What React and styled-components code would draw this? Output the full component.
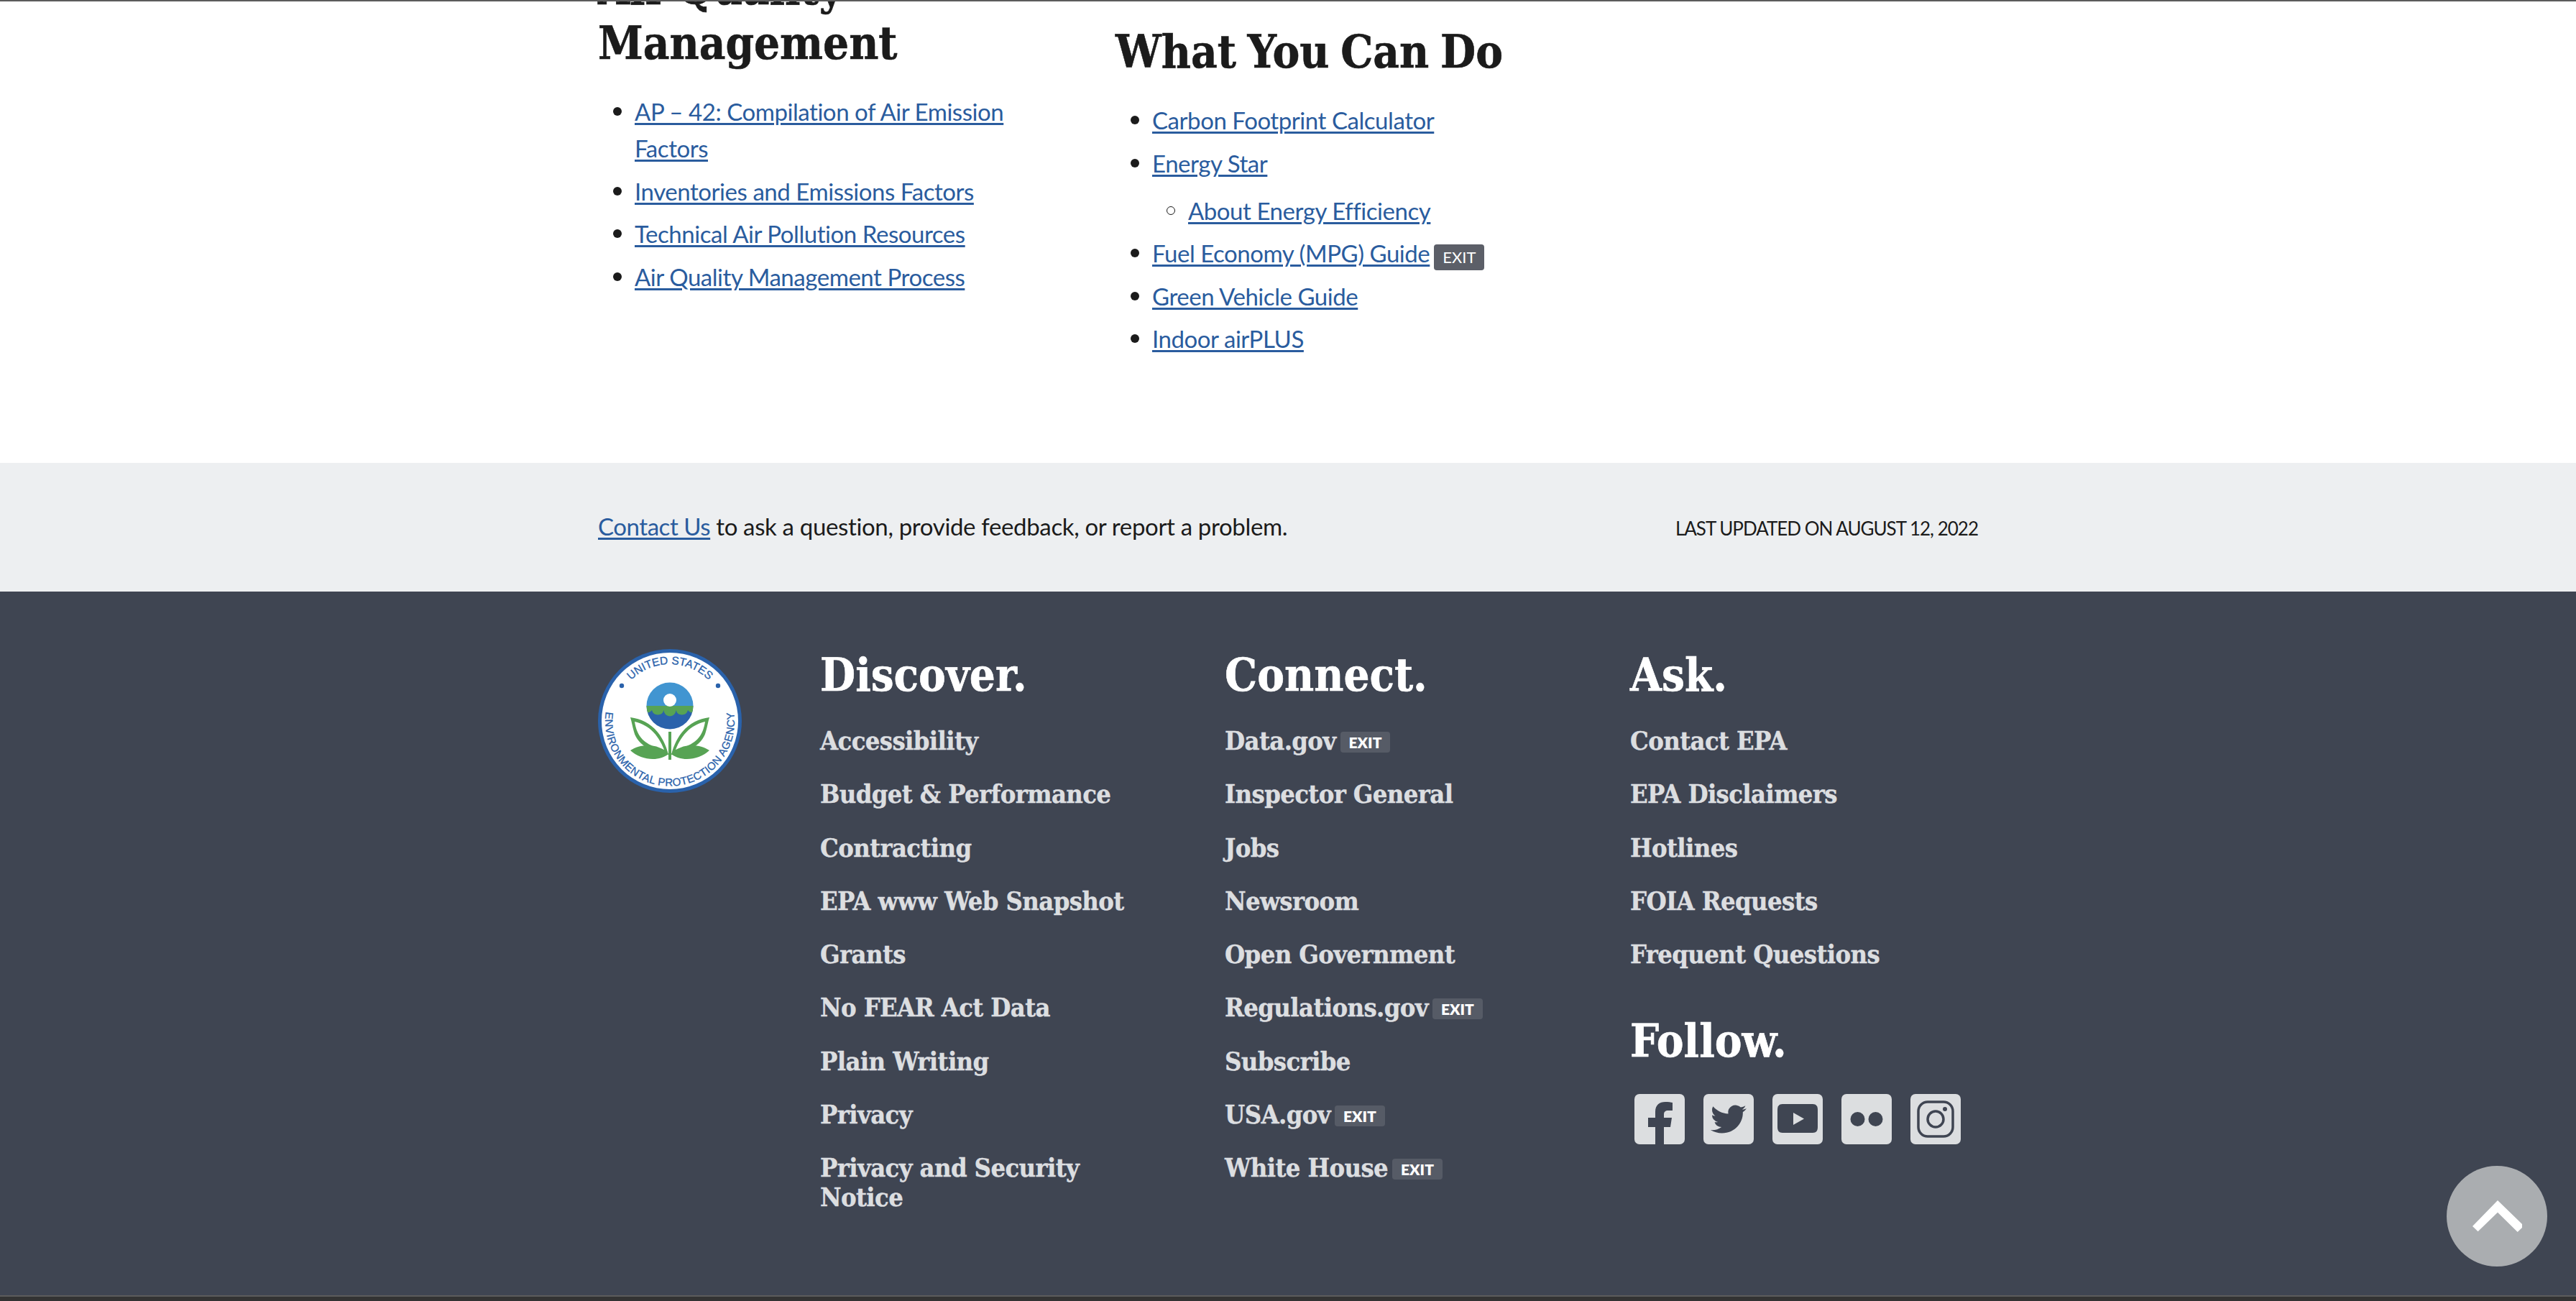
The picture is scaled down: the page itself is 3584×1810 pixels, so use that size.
import React from 'react'
import styled, { createGlobalStyle } from 'styled-components'

const serif = `"DejaVu Serif Condensed", "DejaVu Serif", serif`
const sans = `"Lato", "Noto Sans", sans-serif`

const GlobalStyle = createGlobalStyle`
  html, body { margin: 0; padding: 0; background: #fff; }
  body { font-family: ${sans}; color: #1b1b1b; overflow: hidden; }
`

const Page = styled.div`
  height: 1810px;
  display: flex;
  flex-direction: column;
  overflow: hidden;
  border-top: 2px solid #5c5c5c;
  box-sizing: border-box;
  position: relative;
`

const Content = styled.main`
  height: 642px;
  flex: none;
  width: 1920px;
  margin: 0 auto;
  display: grid;
  grid-template-columns: 720px 720px;
`

const Column = styled.section`
  margin-top: ${({ $top }) => $top}px;
`

const Heading = styled.h2`
  margin: 0 0 32px;
  font-family: ${serif};
  font-size: 63px;
  line-height: 76px;
  font-weight: 700;
  word-spacing: -4px;
  -webkit-text-stroke: 0.6px #1b1b1b;
  color: #1b1b1b;
  width: 620px;
`

const List = styled.ul`
  margin: 0;
  padding: 0 0 0 51px;
  list-style: none;
  width: 570px;
`

const SubList = styled.ul`
  margin: 15px 0 0;
  padding: 0 0 0 50px;
  list-style: none;
`

// bullets sit in the list indent, so they don't change the line height
const Item = styled.li`
  position: relative;
  font-size: 33px;
  line-height: 51px;
  margin-bottom: 8.5px;
  &::before {
    content: '';
    position: absolute;
    left: -30px;
    top: 19px;
    width: 12px;
    height: 12px;
    box-sizing: border-box;
    border-radius: 50%;
    background: ${({ $nested }) => ($nested ? 'transparent' : '#1b1b1b')};
    border: ${({ $nested }) => ($nested ? '1.5px solid #1b1b1b' : '0')};
  }
`

const TextLink = styled.a`
  color: #2a5c9e;
  text-decoration: underline;
  text-decoration-thickness: 3px;
  text-underline-offset: 3px;
  letter-spacing: -0.45px;
`

const ExitTag = styled.span`
  display: inline-block;
  margin-left: 6px;
  padding: 0 12px;
  height: 36px;
  line-height: 36px;
  font-family: ${sans};
  font-size: 22px;
  letter-spacing: 0;
  -webkit-text-stroke: 0;
  font-weight: ${({ $footer }) => ($footer ? 800 : 400)};
  color: #fff;
  border-radius: 4px;
  background: ${({ $footer }) => ($footer ? '#565b66' : '#5c5f68')};
  vertical-align: ${({ $footer }) => ($footer ? '2px' : '-1px')};
  ${({ $footer }) => $footer && 'height: 29px; line-height: 29px; font-size: 21px;'}
`

const Band = styled.div`
  flex: none;
  height: 179px;
  background: #edeff1;
  display: flex;
  align-items: center;
`

const BandInner = styled.div`
  width: 1920px;
  margin: 0 auto;
  padding-bottom: 3px;
  display: flex;
  justify-content: space-between;
  align-items: baseline;
  font-size: 33px;
  letter-spacing: -0.35px;
`

const Updated = styled.span`
  font-size: 26px;
  letter-spacing: -1px;
  text-transform: uppercase;
`

const Footer = styled.footer`
  flex: 1;
  background: #3f4552;
  border-bottom: 2px solid #5c5c5c;
`

const FooterBar = styled.div`
  height: 6px;
  flex: none;
  background: #333;
`

const FooterInner = styled.div`
  width: 1920px;
  margin: 0 auto;
  padding-top: 80px;
  display: grid;
  grid-template-columns: 309px 563px 564px 1fr;
`

const Seal = styled.svg`
  width: 200px;
  height: 200px;
  display: block;
`

const FooterTitle = styled.h3`
  margin: ${({ $follow }) => ($follow ? '60px' : '-4px')} 0 0;
  font-family: ${serif};
  font-size: 63px;
  line-height: 80px;
  font-weight: 700;
  -webkit-text-stroke: 0.6px #fff;
  color: #fff;
`

const FooterLinks = styled.ul`
  margin: 31px 0 0;
  padding: 0;
  list-style: none;
  display: flex;
  flex-direction: column;
  gap: 33.3px;
`

const FooterItem = styled.li`
  font-family: ${serif};
  font-size: 36px;
  line-height: 41px;
  font-weight: 700;
  letter-spacing: -0.6px;
  -webkit-text-stroke: 0.4px #dcdee0;
  color: #dcdee0;
  width: 440px;
`

const SocialRow = styled.div`
  display: flex;
  gap: 26px;
  margin: 34px 0 0 6px;
`

const SocialIcon = styled.svg`
  width: 70px;
  height: 70px;
  display: block;
`

const ScrollTop = styled.button`
  position: absolute;
  right: 40px;
  bottom: 48px;
  width: 140px;
  height: 140px;
  padding: 0;
  border: 0;
  border-radius: 50%;
  background: #aaadb0;
`

const ChevronSvg = styled.svg`
  width: 140px;
  height: 140px;
  display: block;
`

const discover = ['Accessibility', 'Budget & Performance', 'Contracting', 'EPA www Web Snapshot', 'Grants', 'No FEAR Act Data', 'Plain Writing', 'Privacy', 'Privacy and Security Notice']
const connect = [['Data.gov', true], ['Inspector General'], ['Jobs'], ['Newsroom'], ['Open Government'], ['Regulations.gov', true], ['Subscribe'], ['USA.gov', true], ['White House', true]]
const ask = ['Contact EPA', 'EPA Disclaimers', 'Hotlines', 'FOIA Requests', 'Frequent Questions']

const EpaSeal = () => (
  <Seal viewBox="0 0 200 200" aria-label="EPA seal">
    <defs>
      <path id="sealTop" d="M30 66 A77 77 0 0 1 170 66" />
      <path id="sealBottom" d="M15.4 70 A90 90 0 1 0 184.6 70" />
      <clipPath id="sealGlobe"><circle cx="100" cy="79" r="32.5" /></clipPath>
    </defs>
    <circle cx="100" cy="100" r="100" fill="#2a62ab" />
    <circle cx="100" cy="100" r="95" fill="#fff" />
    <text fontFamily="Liberation Sans" fontSize="15.5" fill="#2a62ab" stroke="#2a62ab" strokeWidth="0.3">
      <textPath href="#sealTop" startOffset="50%" textAnchor="middle">UNITED STATES</textPath>
    </text>
    <text fontFamily="Liberation Sans" fontSize="15" fill="#2a62ab" stroke="#2a62ab" strokeWidth="0.3">
      <textPath href="#sealBottom" startOffset="50%" textAnchor="middle" letterSpacing="0.4">ENVIRONMENTAL PROTECTION AGENCY</textPath>
    </text>
    <circle cx="33" cy="51" r="3.2" fill="#2a62ab" />
    <circle cx="167" cy="51" r="3.2" fill="#2a62ab" />
    <g clipPath="url(#sealGlobe)">
      <rect x="60" y="40" width="80" height="39" fill="#4195d1" />
      <rect x="60" y="79" width="80" height="40" fill="#2a62ab" />
      <path d="M60 79 H140 V82 A8.5 8.5 0 0 1 125 85 A8.5 8.5 0 0 1 108.5 85 A8.5 8.5 0 0 1 91.5 85 A8.5 8.5 0 0 1 75 85 A8.5 8.5 0 0 1 60 82 Z" fill="#57a354" />
    </g>
    <circle cx="100" cy="71" r="9" fill="#fff" />
    <rect x="98" y="115" width="4" height="39" fill="#57a354" />
    <path d="M45 95 C70 98 90 115 98 147 C80 145 55 135 50 115 C48 108 47 102 45 95 Z M51 101 C54 120 62 133 92 140 C84 120 72 106 51 101 Z" fill="#57a354" fillRule="evenodd" />
    <path d="M155 95 C130 98 110 115 102 147 C120 145 145 135 150 115 C152 108 153 102 155 95 Z M149 101 C146 120 138 133 108 140 C116 120 128 106 149 101 Z" fill="#57a354" fillRule="evenodd" />
    <path d="M45 141 C60 131 85 131 98 146 C85 157 60 155 45 141 Z" fill="#57a354" />
    <path d="M155 141 C140 131 115 131 102 146 C115 157 140 155 155 141 Z" fill="#57a354" />
  </Seal>
)

const Tile = ({ children, label }) => (
  <SocialIcon viewBox="0 0 70 70" aria-label={label}>
    <rect width="70" height="70" rx="7" fill="#dcdee0" />
    {children}
  </SocialIcon>
)

export default function App() {
  return (
    <Page>
      <GlobalStyle />
      <Content>
        <Column $top={-56}>
          <Heading>Air Quality Management</Heading>
          <List>
            <Item><TextLink>AP – 42: Compilation of Air Emission Factors</TextLink></Item>
            <Item><TextLink>Inventories and Emissions Factors</TextLink></Item>
            <Item><TextLink>Technical Air Pollution Resources</TextLink></Item>
            <Item><TextLink>Air Quality Management Process</TextLink></Item>
          </List>
        </Column>
        <Column $top={32}>
          <Heading>What You Can Do</Heading>
          <List>
            <Item><TextLink>Carbon Footprint Calculator</TextLink></Item>
            <Item>
              <TextLink>Energy Star</TextLink>
              <SubList>
                <Item $nested><TextLink>About Energy Efficiency</TextLink></Item>
              </SubList>
            </Item>
            <Item><TextLink>Fuel Economy (MPG) Guide</TextLink><ExitTag>EXIT</ExitTag></Item>
            <Item><TextLink>Green Vehicle Guide</TextLink></Item>
            <Item><TextLink>Indoor airPLUS</TextLink></Item>
          </List>
        </Column>
      </Content>
      <Band>
        <BandInner>
          <span><TextLink>Contact Us</TextLink> to ask a question, provide feedback, or report a problem.</span>
          <Updated>Last updated on August 12, 2022</Updated>
        </BandInner>
      </Band>
      <Footer>
        <FooterInner>
          <EpaSeal />
          <div>
            <FooterTitle>Discover.</FooterTitle>
            <FooterLinks>
              {discover.map((t) => <FooterItem key={t}>{t}</FooterItem>)}
            </FooterLinks>
          </div>
          <div>
            <FooterTitle>Connect.</FooterTitle>
            <FooterLinks>
              {connect.map(([t, exit]) => (
                <FooterItem key={t}>{t}{exit && <ExitTag $footer>EXIT</ExitTag>}</FooterItem>
              ))}
            </FooterLinks>
          </div>
          <div>
            <FooterTitle>Ask.</FooterTitle>
            <FooterLinks>
              {ask.map((t) => <FooterItem key={t}>{t}</FooterItem>)}
            </FooterLinks>
            <FooterTitle $follow>Follow.</FooterTitle>
            <SocialRow>
              <Tile label="Facebook">
                <path d="M29 70 V46 H19 V33 H29 V25 C29 15 35 11 43 11 C47 11 51 11.5 53 12 V23 H47 C43 23 41 25 41 28 V33 H52 L50 46 H41 V70 Z" fill="#3f4552" />
              </Tile>
              <Tile label="Twitter">
                <path transform="translate(10 11) scale(2.08 2)" d="M23.953 4.57a10 10 0 01-2.825.775 4.958 4.958 0 002.163-2.723c-.951.555-2.005.959-3.127 1.184a4.92 4.92 0 00-8.384 4.482C7.69 8.095 4.067 6.13 1.64 3.162a4.822 4.822 0 00-.666 2.475c0 1.71.87 3.213 2.188 4.096a4.904 4.904 0 01-2.228-.616v.06a4.923 4.923 0 003.946 4.827 4.996 4.996 0 01-2.212.085 4.936 4.936 0 004.604 3.417 9.867 9.867 0 01-6.102 2.105c-.39 0-.779-.023-1.17-.067a13.995 13.995 0 007.557 2.209c9.053 0 13.998-7.496 13.998-13.985 0-.21 0-.42-.015-.63A9.935 9.935 0 0024 4.59z" fill="#3f4552" />
              </Tile>
              <Tile label="YouTube">
                <path d="M14 14 H56 C61 14 63 17 63 22 V46 C63 51 61 54 56 54 H14 C9 54 7 51 7 46 V22 C7 17 9 14 14 14 Z" fill="#3f4552" />
                <path d="M29 26 L44 34.5 L29 43 Z" fill="#dcdee0" />
              </Tile>
              <Tile label="Flickr">
                <circle cx="22.5" cy="35" r="10" fill="#3f4552" />
                <circle cx="47.5" cy="35" r="10" fill="#3f4552" />
              </Tile>
              <Tile label="Instagram">
                <rect x="11" y="11" width="48" height="48" rx="13" fill="none" stroke="#3f4552" strokeWidth="3.5" />
                <circle cx="35" cy="35" r="11" fill="none" stroke="#3f4552" strokeWidth="3.5" />
                <circle cx="48" cy="21" r="3" fill="#3f4552" />
              </Tile>
            </SocialRow>
          </div>
        </FooterInner>
      </Footer>
      <FooterBar />
      <ScrollTop aria-label="Back to top">
        <ChevronSvg viewBox="0 0 140 140">
          <path d="M36 84 L43.6 91.3 L71 64.7 L98.7 92 L105 86 V81 L71 48 Z" fill="#fff" />
        </ChevronSvg>
      </ScrollTop>
    </Page>
  )
}
